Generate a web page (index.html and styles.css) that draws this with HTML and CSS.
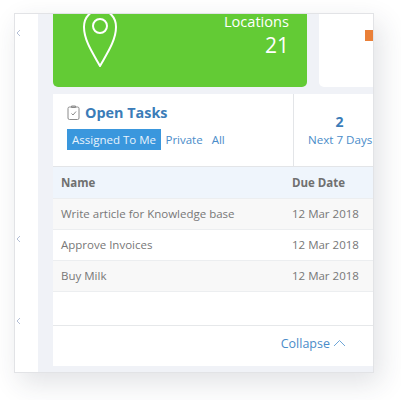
FILE: index.html
```html
<!DOCTYPE html>
<html lang="en">
<head>
  <meta charset="UTF-8">
  <title>Open Tasks</title>
  <link rel="stylesheet" href="styles.css">
</head>
<body>
<div class="frame">
  <div class="sidebar">
    <svg class="side-arrow first" width="5" height="8" viewBox="0 0 5 8"><path d="M4 1 1 4l3 3"/></svg>
    <svg class="side-arrow second" width="5" height="8" viewBox="0 0 5 8"><path d="M4 1 1 4l3 3"/></svg>
    <svg class="side-arrow third" width="5" height="8" viewBox="0 0 5 8"><path d="M4 1 1 4l3 3"/></svg>
  </div>
  <div class="main">
    <div class="cards">
      <div class="card-green">
        <svg class="pin" width="36" height="53" viewBox="0 0 36 53">
          <path d="M18 52C12 41 2 27 2 13 2 3 9-4 18-4s16 7 16 17C34 27 24 41 18 52Z"/>
          <circle cx="18" cy="12" r="7"/>
        </svg>
        <div class="card-info">
          <div class="card-label">Locations</div>
          <div class="card-num">21</div>
        </div>
      </div>
      <div class="card-white">
        <div class="orange"></div>
      </div>
    </div>

    <div class="panel">
      <div class="panel-head">
        <div class="panel-left">
          <div class="panel-title">
            <svg class="clip" width="13" height="15" viewBox="0 0 13 15">
              <rect x="1" y="2" width="11" height="12.5" rx="1.5"/>
              <path d="M4.5 2.5V1h4v1.500zM4.500 8.500l1.500 1.500 3-3.500"/>
            </svg>
            <span>Open Tasks</span>
          </div>
          <div class="tabs">
            <span class="tab active">Assigned To Me</span>
            <span class="tab">Private</span>
            <span class="tab">All</span>
          </div>
        </div>
        <div class="panel-stat">
          <div class="stat-num">2</div>
          <div class="stat-label">Next 7 Days</div>
        </div>
      </div>

      <div class="row row-head">
        <div class="col-name">Name</div>
        <div class="col-date">Due Date</div>
      </div>
      <div class="row row-odd">
        <div class="col-name">Write article for Knowledge base</div>
        <div class="col-date">12 Mar 2018</div>
      </div>
      <div class="row">
        <div class="col-name">Approve Invoices</div>
        <div class="col-date">12 Mar 2018</div>
      </div>
      <div class="row row-odd">
        <div class="col-name">Buy Milk</div>
        <div class="col-date">12 Mar 2018</div>
      </div>

      <div class="panel-foot">
        <span>Collapse</span>
        <svg class="collapse-icon" width="13" height="8" viewBox="0 0 13 8"><path d="M1 7 6.500 1.500 12 7"/></svg>
      </div>
    </div>
  </div>
</div>
</body>
</html>
```

FILE: styles.css
```css
html, body {
  margin: 0;
  height: 100%;
  background: #fff;
  font-family: "Open Sans", Arial, sans-serif;
  overflow: hidden;
}
body {
  padding: 13px 0 0 14px;
  box-sizing: border-box;
}
.frame {
  display: flex;
  width: 360px;
  height: 360px;
  box-sizing: border-box;
  border: 1px solid #e2e3e6;
  background: #fff;
  overflow: hidden;
  box-shadow: 6px 10px 26px rgba(40,50,70,.14);
}
.sidebar {
  width: 23px;
  flex: none;
  display: flex;
  flex-direction: column;
  align-items: flex-start;
  padding: 15px 0 0 1px;
  box-sizing: border-box;
}
.side-arrow {
  fill: none;
  stroke: #b4bfd6;
  stroke-width: 1;
}
.side-arrow.second { margin-top: 198px; }
.side-arrow.third { margin-top: 74px; }
.main {
  flex: 1;
  min-width: 0;
  background: #f0f2f7;
  padding-left: 15px;
}
.cards {
  display: flex;
  gap: 12px;
  height: 73px;
  width: 340px;
}
.card-green {
  width: 254px;
  flex: none;
  display: flex;
  justify-content: space-between;
  box-sizing: border-box;
  padding: 0 18px 0 29px;
  background: #63cb35;
  border-radius: 0 0 5px 5px;
  color: #fff;
}
.pin {
  fill: none;
  stroke: #fff;
  stroke-width: 2;
}
.card-info {
  text-align: right;
}
.card-label {
  font-size: 14.6px;
  line-height: 14px;
}
.card-num {
  font-size: 21px;
  line-height: 28px;
  margin-top: 3px;
}
.card-white {
  flex: 1;
  background: #fff;
  border-radius: 0 0 5px 5px;
  padding: 16px 0 0 46px;
}
.orange {
  width: 12px;
  height: 11px;
  background: #ea8038;
}
.panel {
  width: 320px;
  margin-top: 7px;
  background: #fff;
}
.panel-head {
  display: flex;
  height: 72px;
  box-sizing: content-box;
  border-bottom: 1px solid #e3e5e8;
}
.panel-left {
  width: 241px;
  flex: none;
  box-sizing: border-box;
  padding: 9px 0 0 14px;
  border-right: 1px solid #e3e5e8;
}
.panel-title {
  display: flex;
  align-items: center;
  gap: 5px;
  font-size: 14.4px;
  line-height: 19px;
  font-weight: 700;
  color: #3b7cb8;
}
.clip {
  fill: none;
  stroke: #8a8a8a;
  stroke-width: 1;
}
.tabs {
  display: flex;
  align-items: center;
  margin-top: 7px;
  font-size: 11.5px;
  color: #4a8cc9;
}
.tab {
  line-height: 21px;
  margin-left: 4.500px;
  margin-right: 4.500px;
}
.tab.active {
  margin-left: 0;
  margin-right: 0;
  padding: 0 5px;
  background: #3a97dd;
  color: #e8f3fc;
}
.panel-stat {
  flex: 1;
  padding: 20px 0 0 14px;
  white-space: nowrap;
  color: #4a8cc9;
  font-size: 11.6px;
  line-height: 16px;
}
.stat-num {
  width: 63px;
  margin-bottom: 2px;
  text-align: center;
  font-size: 14px;
  font-weight: 700;
  line-height: 16px;
  color: #3b7cb8;
}
.row {
  display: flex;
  height: 31px;
  align-items: center;
  box-sizing: border-box;
  padding-bottom: 2px;
  border-bottom: 1px solid #eceef0;
  font-size: 11.5px;
  color: #777;
}
.row:last-of-type {
  border-bottom: 0;
}
.row-odd {
  background: #f8f8f8;
}
.row-head {
  height: 32px;
  padding-bottom: 0;
  background: #eff5fc;
  font-weight: 700;
  color: #707070;
}
.col-name {
  width: 239px;
  flex: none;
  padding-left: 8px;
  box-sizing: border-box;
}
.panel-foot {
  display: flex;
  align-items: center;
  justify-content: flex-end;
  gap: 3px;
  height: 41px;
  box-sizing: border-box;
  margin-top: 33px;
  padding: 0 27px 5px 0;
  border-top: 1px solid #e6e8ea;
  font-size: 12.5px;
  color: #4a8cc9;
}
.collapse-icon {
  margin-bottom: 2px;
  fill: none;
  stroke: #6ea6d8;
  stroke-width: 1;
}
```
